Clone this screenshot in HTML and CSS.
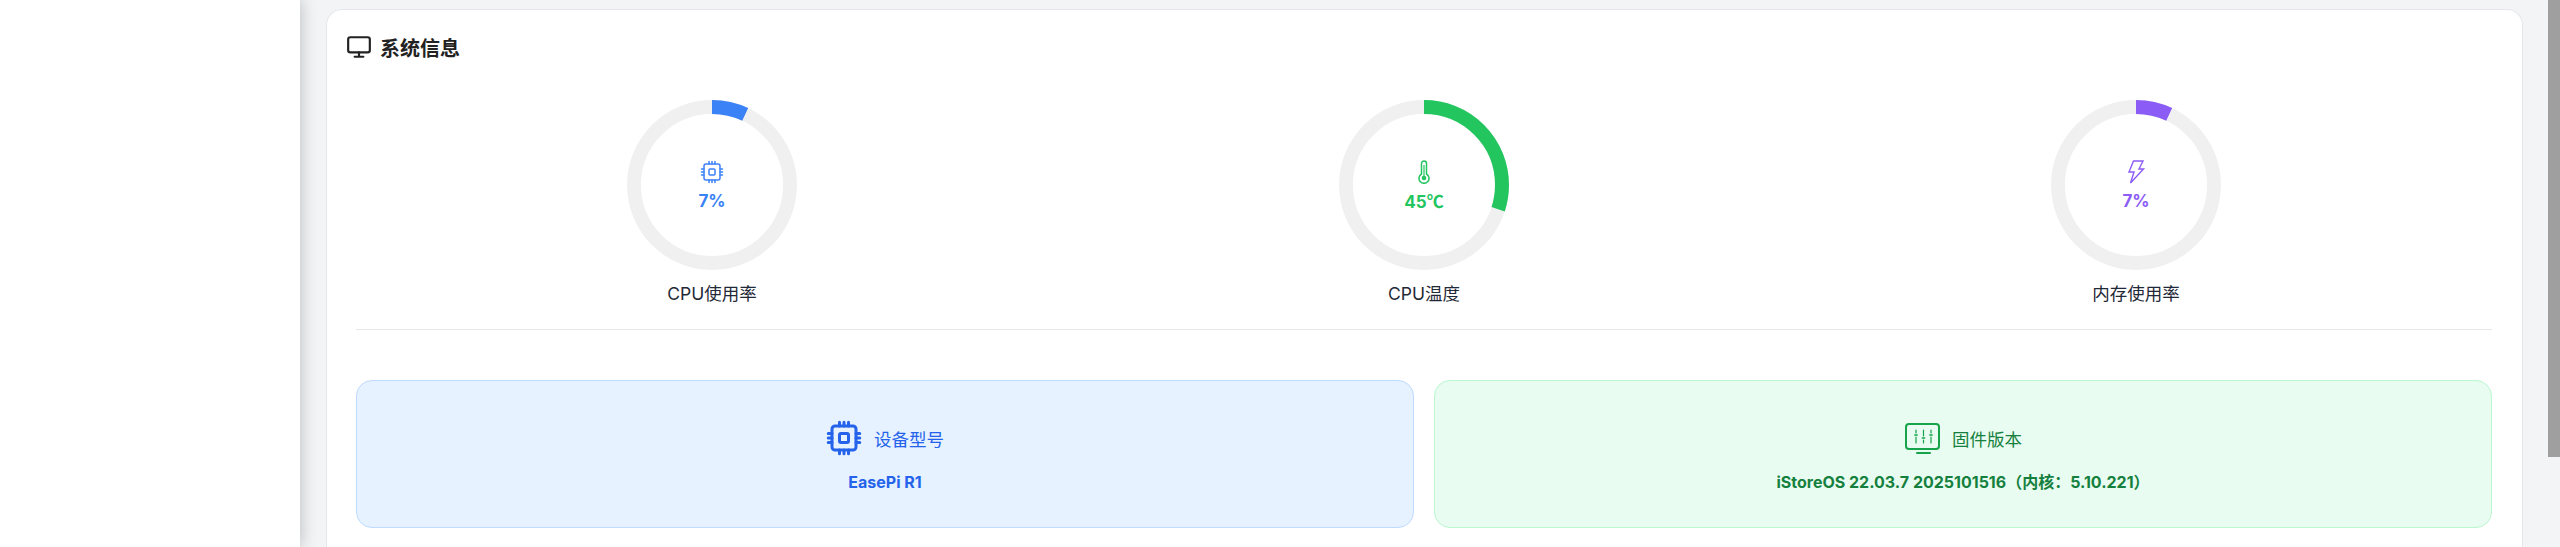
FILE: index.html
```html
<!DOCTYPE html>
<html lang="zh-CN">
<head>
    <meta charset="UTF-8">
    <title>系统信息</title>
    <link rel="stylesheet" href="styles.css">
</head>
<body>

<aside class="sidebar"></aside>

<main class="content">
    <section class="card">
        <h2 class="card-title">
            <svg class="title-icon" viewBox="0 0 24 24" fill="none" stroke="currentColor" stroke-width="2" stroke-linecap="round" stroke-linejoin="round">
                <rect x="2" y="3" width="20" height="14" rx="2"/>
                <path d="M8 21h8M12 17v4"/>
            </svg>
            系统信息
        </h2>

        <div class="gauges">
            <div class="gauge gauge-blue">
                <div class="ring">
                    <svg class="ring-svg" viewBox="0 0 170 170">
                        <circle class="ring-bg" cx="85" cy="85" r="78"/>
                        <circle class="ring-value" cx="85" cy="85" r="78" stroke-dasharray="34.3 490.1"/>
                    </svg>
                    <div class="ring-center">
                        <svg class="ring-icon" viewBox="0 0 24 24" fill="none" stroke="currentColor" stroke-width="1.5" stroke-linecap="round" stroke-linejoin="round">
                            <rect x="4" y="4" width="16" height="16" rx="2"/>
                            <rect x="9" y="9" width="6" height="6" rx="1"/>
                            <path d="M9 1.5V4M12 1.5V4M15 1.5V4M9 20v2.5M12 20v2.5M15 20v2.5M20 9h2.5M20 12h2.5M20 15h2.5M1.5 9H4M1.5 12H4M1.5 15H4"/>
                        </svg>
                        <span class="ring-text">7%</span>
                    </div>
                </div>
                <div class="gauge-label">CPU使用率</div>
            </div>

            <div class="gauge gauge-green">
                <div class="ring">
                    <svg class="ring-svg" viewBox="0 0 170 170">
                        <circle class="ring-bg" cx="85" cy="85" r="78"/>
                        <circle class="ring-value" cx="85" cy="85" r="78" stroke-dasharray="147 490.1"/>
                    </svg>
                    <div class="ring-center">
                        <svg class="ring-icon" viewBox="0 0 24 24" fill="none" stroke="currentColor" stroke-width="1.5" stroke-linecap="round" stroke-linejoin="round">
                            <path d="M9.5 14V3.5a2.5 2.5 0 0 1 5 0V14a5 5 0 1 1-5 0z"/>
                            <path d="M12 5.5V17" stroke-width="1.2"/>
                            <circle cx="12" cy="18" r="2.3" fill="currentColor" stroke="none"/>
                        </svg>
                        <span class="ring-text">45<span class="degree">℃</span></span>
                    </div>
                </div>
                <div class="gauge-label">CPU温度</div>
            </div>

            <div class="gauge gauge-purple">
                <div class="ring">
                    <svg class="ring-svg" viewBox="0 0 170 170">
                        <circle class="ring-bg" cx="85" cy="85" r="78"/>
                        <circle class="ring-value" cx="85" cy="85" r="78" stroke-dasharray="34.3 490.1"/>
                    </svg>
                    <div class="ring-center">
                        <svg class="ring-icon" viewBox="0 0 24 24" fill="none" stroke="currentColor" stroke-width="1.4" stroke-linejoin="miter">
                            <path d="M9.5 1h9.5l-4 8h4.5L6.5 23l3.5-11H5z"/>
                        </svg>
                        <span class="ring-text">7%</span>
                    </div>
                </div>
                <div class="gauge-label">内存使用率</div>
            </div>
        </div>

        <div class="info-row">
            <div class="info-box info-blue">
                <div class="info-head">
                    <svg class="info-icon" viewBox="0 0 24 24" fill="none" stroke="currentColor" stroke-width="2" stroke-linecap="round" stroke-linejoin="round">
                        <rect x="4" y="4" width="16" height="16" rx="2"/>
                        <rect x="9" y="9" width="6" height="6" rx="1"/>
                        <path d="M9 1.5V4M15 1.5V4M12 1.5V4M9 20v2.5M15 20v2.5M12 20v2.5M20 9h2.5M20 15h2.5M20 12h2.5M1.5 9H4M1.5 15H4M1.5 12H4"/>
                    </svg>
                    <span>设备型号</span>
                </div>
                <div class="info-value">EasePi R1</div>
            </div>

            <div class="info-box info-green">
                <div class="info-head">
                    <svg class="info-icon" viewBox="0 0 36 36" fill="none" stroke="currentColor" stroke-width="2" stroke-linecap="round">
                        <rect x="2" y="4" width="33" height="25" rx="3"/>
                        <path d="M13 33h13"/>
                        <path d="M12 10v3M12 17v6M19.500 10v6M19.500 20v3M27 10v3M27 17v6" stroke-width="1.200"/>
                        <path d="M10.800 15h2.400M18.300 18h2.400M25.800 15h2.400" stroke-width="1.400"/>
                    </svg>
                    <span>固件版本</span>
                </div>
                <div class="info-value">iStoreOS 22.03.7 2025101516（内核：5.10.221）</div>
            </div>
        </div>
    </section>
</main>

<div class="scrollbar">
    <div class="scrollbar-thumb"></div>
</div>

</body>
</html>
```

FILE: styles.css
```css
* {
    box-sizing: border-box;
}

body {
    margin: 0;
    height: 100vh;
    display: flex;
    overflow: hidden;
    background-color: #f3f4f6;
    font-family: Inter, "Noto Sans CJK SC", sans-serif;
    color: #1f2937;
}

.sidebar {
    flex: 0 0 300px;
    background-color: #ffffff;
    box-shadow: 0 0 16px rgba(0, 0, 0, 0.25);
}

.content {
    flex: 1;
    min-width: 0;
    padding: 9px 25px 0 26px;
}

.scrollbar {
    flex: 0 0 12px;
}

.scrollbar-thumb {
    height: 457px;
    background-color: #9f9f9f;
}

.card {
    background-color: #ffffff;
    border: 1px solid #e5e7eb;
    border-bottom: none;
    border-radius: 16px 16px 0 0;
    padding: 23px 30px 40px 19px;
    height: 600px;
}

.card-title {
    display: flex;
    align-items: center;
    gap: 8px;
    height: 28px;
    margin: 0 0 39px;
    font-size: 20px;
    font-weight: 700;
    color: #222222;
}

.title-icon {
    width: 26px;
    height: 26px;
    color: #222222;
}

.gauges {
    display: grid;
    grid-template-columns: repeat(3, 1fr);
    margin-left: 10px;
    padding-bottom: 23px;
    border-bottom: 1px solid #e5e7eb;
}

.gauge {
    display: flex;
    flex-direction: column;
    align-items: center;
}

.gauge-blue { color: #3b82f6; }
.gauge-green { color: #22c55e; }
.gauge-purple { color: #8b5cf6; }

.ring {
    position: relative;
    width: 170px;
    height: 170px;
}

.ring-svg {
    display: block;
    width: 170px;
    height: 170px;
    transform: rotate(-90deg);
}

.ring-bg,
.ring-value {
    fill: none;
    stroke-width: 14;
}

.ring-bg {
    stroke: #f0f0f0;
}

.ring-value {
    stroke: currentColor;
}

.ring-center {
    position: absolute;
    inset: 0;
    display: flex;
    flex-direction: column;
    align-items: center;
    justify-content: center;
    gap: 6px;
    padding-top: 2px;
}

.ring-icon {
    width: 24px;
    height: 24px;
}

.ring-text {
    font-size: 17px;
    line-height: 22px;
    font-weight: 700;
}

.degree {
    font-family: "Noto Sans CJK SC", sans-serif;
}

.gauge-label {
    margin-top: 12px;
    font-size: 17.5px;
    line-height: 24px;
    color: #1f2937;
}

.info-row {
    display: grid;
    grid-template-columns: 1fr 1fr;
    gap: 20px;
    margin: 50px 0 0 10px;
}

.info-box {
    height: 148px;
    border: 1px solid;
    border-radius: 16px;
    padding-top: 4px;
    display: flex;
    flex-direction: column;
    align-items: center;
    justify-content: center;
    gap: 16px;
}

.info-blue {
    background-color: #e6f2ff;
    border-color: #bfdbfe;
    color: #2563eb;
}

.info-green {
    background-color: #e8fcf1;
    border-color: #bbf7d0;
    color: #15803d;
}

.info-head {
    display: flex;
    align-items: center;
    gap: 12px;
    height: 36px;
    font-size: 17.5px;
}

.info-icon {
    width: 36px;
    height: 36px;
}

.info-green .info-icon {
    color: #16a34a;
}

.info-value {
    font-size: 16px;
    line-height: 20px;
    font-weight: 700;
}

.info-blue .info-value {
    color: #2563eb;
}
```
